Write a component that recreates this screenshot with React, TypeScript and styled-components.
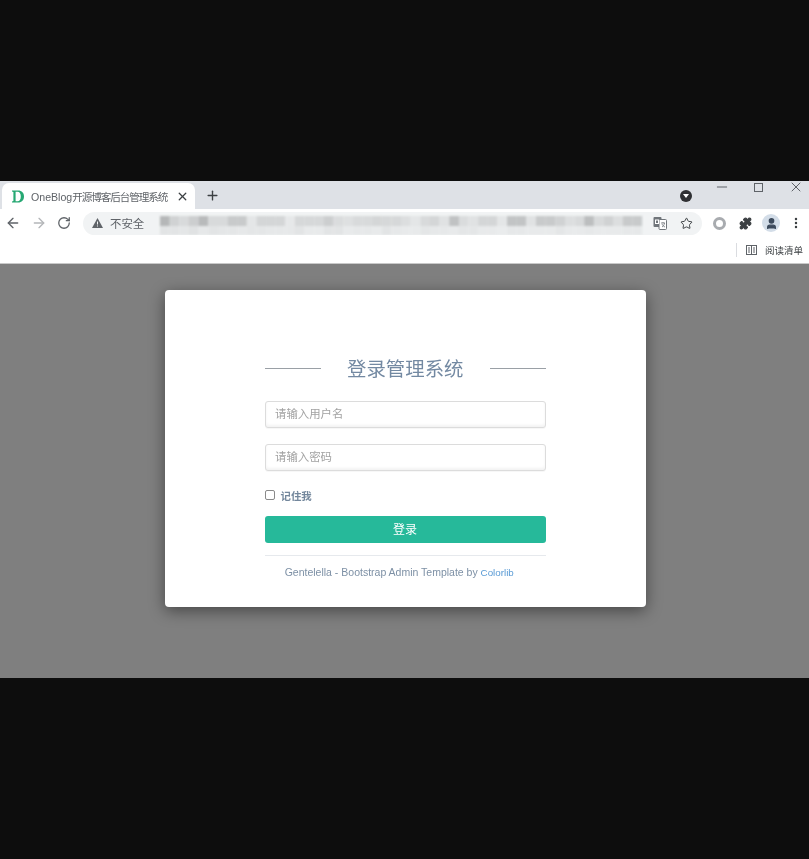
import React from "react";
import styled, { createGlobalStyle } from "styled-components";
import { ArrowLeft, ArrowRight, RotateCw, Plus, X, Minus, Star, MoreVertical, User, Puzzle } from "lucide-react";

const Global = createGlobalStyle`
  html, body { margin: 0; padding: 0; background: #0d0d0d; }
  body { font-family: "Liberation Sans", "Noto Sans CJK SC", sans-serif; }
  * { box-sizing: border-box; }
`;

const Page = styled.div`
  width: 809px; height: 859px; display: flex; flex-direction: column; justify-content: center; background: #0d0d0d; overflow: hidden;
`;
const Browser = styled.div`
  height: 497px; display: flex; flex-direction: column; filter: blur(0.4px);
`;
const TabStrip = styled.div`
  height: 28px; background: #dee1e6; display: flex; align-items: flex-end; padding-left: 2px; overflow: hidden;
`;
const Tab = styled.div`
  flex: none; width: 193px; height: 26px; background: #fff; border-radius: 7px 7px 0 0; display: flex; align-items: center; padding: 0 6px 0 10px;
`;
const Favicon = styled.svg`
  flex: none; margin-right: 7px;
`;
const TabTitle = styled.span`
  flex: 1; font-size: 10.6px; color: #5f6368; white-space: nowrap;
`;
const TabTitleCjk = styled.span`
  letter-spacing: -1.1px;
`;
const NewTab = styled.div`
  flex: none; margin-left: 10px; height: 28px; display: flex; align-items: center; color: #3c4043;
`;
const StripRight = styled.div`
  margin-left: auto; margin-right: -5px; height: 28px; display: flex; align-items: flex-start; color: #5f6368;
`;
const ProfileDot = styled.div`
  width: 12px; height: 12px; border-radius: 50%; background: #2f3033; margin-top: 9px; margin-right: 11px; display: flex; align-items: center; justify-content: center;
  &::after { content: ""; border-left: 3px solid transparent; border-right: 3px solid transparent; border-top: 4px solid #fff; }
`;
const WindowButton = styled.div`
  width: 37px; height: 12px; display: flex; align-items: center; justify-content: center;
`;
const RestoreGlyph = styled.span`
  width: 9px; height: 9px; border: 1px solid #5f6368; display: block;
`;
const Toolbar = styled.div`
  height: 28px; background: #fff; display: flex; align-items: center; padding-left: 5px; color: #5f6368;
`;
const NavButton = styled.div<{ $faded?: boolean }>`
  width: 26px; display: flex; justify-content: flex-start; color: ${p => (p.$faded ? "#b4b6b9" : "#5f6368")};
`;
const Omnibox = styled.div`
  width: 619px; height: 23px; border-radius: 12px; background: #f1f3f4; display: flex; align-items: center; padding-left: 9px; position: relative; overflow: hidden;
`;
const Insecure = styled.span`
  font-size: 11.4px; color: #5f6368; margin-left: 7px; white-space: nowrap;
`;
const Mosaic = styled.svg`
  position: absolute; left: 77px; top: 0; filter: blur(1px);
`;
const OmniIcons = styled.div`
  position: absolute; right: 0; top: 0; height: 23px; width: 56px; display: flex; align-items: center; gap: 13px; padding-left: 7px;
`;
const ToolIcons = styled.div`
  display: flex; align-items: center; margin-left: 11px;
`;
const RingIcon = styled.div`
  width: 13px; height: 13px; border-radius: 50%; border: 3px solid #a8abaf; margin-right: 13px;
`;
const Avatar = styled.div`
  width: 18px; height: 18px; border-radius: 50%; background: #d3dde8; display: flex; align-items: center; justify-content: center; margin-left: 10px; margin-right: 9px; color: #3c4a5c;
`;
const Bookmarks = styled.div`
  height: 27px; background: #fff; display: flex; align-items: center; justify-content: flex-end; padding-right: 6px; border-bottom: 1px solid #c9c9c9;
`;
const Divider = styled.div`
  width: 1px; height: 14px; background: #dadce0; margin-right: 9px;
`;
const ReadLabel = styled.span`
  font-size: 9.5px; color: #3c4043; margin-left: 8px; white-space: nowrap;
`;
const Viewport = styled.div`
  flex: 1; background: #7f7f7f; display: flex; justify-content: center; align-items: flex-start; padding-top: 26px; padding-left: 2px;
`;
const Card = styled.div`
  width: 481px; height: 317px; background: #fff; border-radius: 4px; box-shadow: 0 4px 16px rgba(0,0,0,.45); padding: 60px 100px 0 99.5px; color: #73879c;
`;
const TitleRow = styled.div`
  display: flex; align-items: center; height: 36px; margin-bottom: 14px; margin-top: 0.5px;
`;
const TitleLine = styled.div`
  width: 56px; height: 1px; background: #9aa0a6;
`;
const Title = styled.h1`
  flex: 1; margin: 0; padding-bottom: 3px; text-align: center; font-size: 19.4px; font-weight: 400; color: #7389a2;
`;
const TextInput = styled.input`
  display: block; width: 281px; height: 27px; border: 1px solid #dcdcdc; border-radius: 3px; padding: 0 9.5px; margin-bottom: 16px;
  font-size: 11.4px; font-family: "Liberation Sans", "Noto Sans CJK SC", sans-serif; outline: none; background: #fff;
  box-shadow: inset 0 -2px 3px rgba(0,0,0,.05), 0 1px 0 rgba(0,0,0,.03);
  &::placeholder { color: #a2a2a2; opacity: 1; }
`;
const RememberRow = styled.label`
  display: flex; align-items: center; height: 18px; margin-top: 16px; font-size: 10.4px; font-weight: 700; color: #73879c; gap: 6px;
`;
const CheckBox = styled.span`
  width: 10px; height: 10px; border: 1px solid #8a8a8a; border-radius: 2px; display: block; background: #fff; margin-top: -2px;
`;
const Submit = styled.button`
  display: block; width: 281px; height: 27px; margin-top: 11px; border: none; border-radius: 3px; background: #26b99a; color: #fff; font-size: 12px;
  font-family: "Liberation Sans", "Noto Sans CJK SC", sans-serif; padding: 0 0 2px;
`;
const Separator = styled.div`
  width: 281px; height: 1px; background: #e6e9ed; margin-top: 12px;
`;
const Credit = styled.p`
  margin: 10px 0 0; padding-right: 12px; text-align: center; font-size: 10.5px; line-height: 13px; color: #7d90a5; white-space: nowrap;
`;
const CreditLink = styled.a`
  color: #5a9bd5; text-decoration: none; font-size: 9.8px;
`;

const row1 = [181,208,216,204,184,216,216,200,200,228,212,212,212,230,214,214,214,204,218,222,216,216,212,214,214,220,228,216,212,224,192,218,224,212,212,228,194,194,224,200,200,208,220,216,188,216,208,220,200,200];
const row2 = [226,226,228,224,230,226,228,228,230,228,228,230,230,230,226,232,232,226,226,232,230,230,232,226,230,232,232,228,230,230,232,228,228,232,232,234,230,230,232,232,232,228,232,232,230,232,232,232,230,230];

const Cells: React.FC<{ values: number[]; y: number; h: number }> = ({ values, y, h }) => (
  <>
    {values.map((v, i) => (
      <rect key={i} x={i * 9.64} y={y} width={9.8} height={h} fill={`rgb(${v},${v + 2},${v + 3})`} />
    ))}
  </>
);

export default function App() {
  return (
    <Page>
      <Global />
      <Browser>
        <TabStrip>
          <Tab>
            <Favicon width="12" height="13" viewBox="0 0 12 13" aria-hidden="true">
              <path fillRule="evenodd" fill="#26a873" d="M0 .5h6.2C9.8.5 12 3 12 6.5s-2.2 6-5.8 6H0v-1.1l1.4-.3V1.9L0 1.6zM3.6 1.7v9.6h2c2 0 3.2-1.8 3.2-4.8S7.6 1.7 5.6 1.7z" />
            </Favicon>
            <TabTitle>OneBlog<TabTitleCjk>开源博客后台管理系统</TabTitleCjk></TabTitle>
            <X size={13} strokeWidth={2.4} color="#3c4043" />
          </Tab>
          <NewTab><Plus size={15} strokeWidth={2.2} /></NewTab>
          <StripRight>
            <ProfileDot />
            <WindowButton><Minus size={16} strokeWidth={1.5} /></WindowButton>
            <WindowButton><RestoreGlyph /></WindowButton>
            <WindowButton><X size={16} strokeWidth={1.5} /></WindowButton>
          </StripRight>
        </TabStrip>
        <Toolbar>
          <NavButton><ArrowLeft size={16} strokeWidth={2} /></NavButton>
          <NavButton $faded><ArrowRight size={16} strokeWidth={2} /></NavButton>
          <NavButton><RotateCw size={14} strokeWidth={2.2} /></NavButton>
          <Omnibox>
            <svg width="11" height="10" viewBox="0 0 11 10"><path d="M5.5 0 11 10H0z" fill="#5f6368" /><rect x="5" y="3.5" width="1" height="3" fill="#f1f3f4" /><rect x="5" y="7.5" width="1" height="1" fill="#f1f3f4" /></svg>
            <Insecure>不安全</Insecure>
            <Mosaic width="484" height="23" viewBox="0 0 484 23">
              <Cells values={row1} y={4} h={10} />
              <Cells values={row2} y={14} h={9} />
            </Mosaic>
            <OmniIcons>
              <svg width="14" height="14" viewBox="0 0 14 14">
                <rect x="0.5" y="1" width="8" height="10" rx="1" fill="#70757a" />
                <rect x="6" y="3.5" width="7.5" height="10" rx="1" fill="#fff" stroke="#70757a" />
                <rect x="2.5" y="4" width="3" height="3.5" fill="none" stroke="#fff" strokeWidth="1" />
                <path d="M8 7h4M10 6v1M9 11c1.5-1 2.2-2 2.5-4M9 8c.5 1.2 1.5 2.4 3 3" fill="none" stroke="#70757a" strokeWidth=".8" />
              </svg>
              <Star size={13} strokeWidth={1.8} color="#3c4043" />
            </OmniIcons>
          </Omnibox>
          <ToolIcons>
            <RingIcon />
            <Puzzle size={13} strokeWidth={2} fill="#3c4043" color="#3c4043" />
            <Avatar><User size={13} strokeWidth={2.5} fill="#3c4a5c" /></Avatar>
            <MoreVertical size={14} strokeWidth={2.2} color="#3c4043" />
          </ToolIcons>
        </Toolbar>
        <Bookmarks>
          <Divider />
          <svg width="11" height="10" viewBox="0 0 11 10">
            <rect x=".5" y=".5" width="10" height="9" fill="none" stroke="#5f6368" />
            <path d="M5.5 .5v9M2 3h2M2 5h2M2 7h2M7 3h2M7 5h2M7 7h2" stroke="#5f6368" strokeWidth="1" />
          </svg>
          <ReadLabel>阅读清单</ReadLabel>
        </Bookmarks>
        <Viewport>
          <Card>
            <TitleRow>
              <TitleLine />
              <Title>登录管理系统</Title>
              <TitleLine />
            </TitleRow>
            <TextInput placeholder="请输入用户名" readOnly />
            <TextInput placeholder="请输入密码" readOnly />
            <RememberRow><CheckBox />记住我</RememberRow>
            <Submit>登录</Submit>
            <Separator />
            <Credit>Gentelella - Bootstrap Admin Template by <CreditLink href="#">Colorlib</CreditLink></Credit>
          </Card>
        </Viewport>
      </Browser>
    </Page>
  );
}
